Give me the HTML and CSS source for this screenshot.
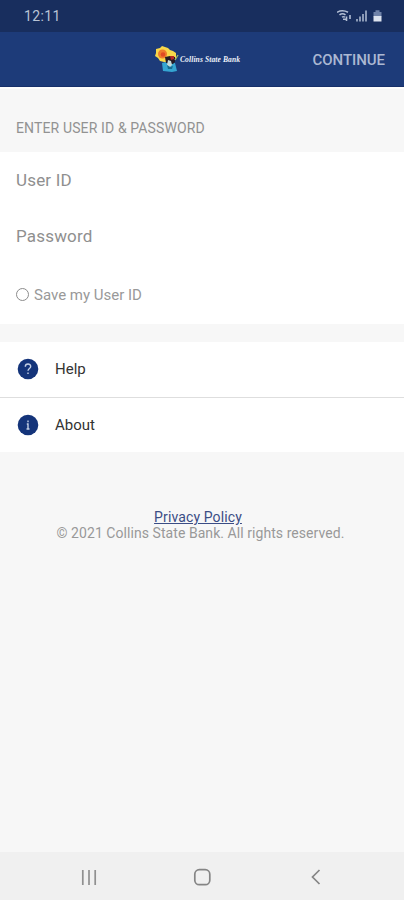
FILE: index.html
```html
<!DOCTYPE html>
<html lang="en">
<head>
<meta charset="utf-8">
<title>Collins State Bank</title>
<link rel="stylesheet" href="styles.css">
</head>
<body>
<div class="screen">
  <div class="status">
    <span class="clock">12:11</span>
    <svg class="status-icons" width="48" height="14" viewBox="0 0 48 14" fill="none">
      <path d="M0 3.300Q5.500 .2 11 3.300M2.500 5.800Q5.500 3.600 8.500 5.800M5 8.200Q6.500 7.200 8 8.200" stroke="#b3bfd5" stroke-width="1.600"/>
      <path d="M6 10.300h3M9.500 7.500v4.500M13 6v4" stroke="#b3bfd5" stroke-width="1.600"/>
      <path d="M20 10V12.500M23 7.500V12.500M26 5V12.500M29 1.500V12.500" stroke="#a9b6ce" stroke-width="1.600"/>
      <path d="M36.500 3h2V1.300h4V3h2v4.500h-8z" fill="#6f82a8"/>
      <path d="M36.500 7h8v5.500h-8z" fill="#dce3ee"/>
    </svg>
  </div>
  <header class="header">
    <div class="brand">
      <svg width="26" height="28" viewBox="0 0 26 28">
        <path d="M2 4l4-1 2-2 3 1 3 1 2 2 3 1 3 2v5l-5 5-7-1-4-1-2-3-3-2 1-3z" fill="#f8d84a"/>
        <circle cx="8.500" cy="9" r="4.500" fill="#ee7b2c"/>
        <circle cx="9" cy="9.500" r="2.300" fill="#df4a24"/>
        <path d="M8 18l4-1 9 1 2 8-5 1-9-1z" fill="#35a5d2"/>
        <path d="M11 12l5-1 5 1v5l-2 2-7-1z" fill="#251c25"/>
        <path d="M16 11l4 0 0 3-3 1z" fill="#b62727"/>
        <path d="M14 15l3 1 1 4-2 2-3-2z" fill="#c5d9d8"/>
        <path d="M13 20l3 2 3-1-1 3-4 0z" fill="#176c91"/>
        <path d="M21 15l3-5" stroke="#a5b867" stroke-width="1.300"/>
      </svg>
      <span class="brand-name">Collins State Bank</span>
    </div>
    <span class="continue">CONTINUE</span>
  </header>
  <main class="main">
    <h1 class="section-title"><span>ENTER USER ID &amp; PASSWORD</span></h1>
    <section class="form">
      <div class="field"><span class="user">User ID</span></div>
      <div class="field"><span class="pass">Password</span></div>
      <div class="save"><i class="radio"></i><span class="save-label">Save my User ID</span></div>
    </section>
    <nav class="menu">
      <div class="item">
        <svg width="22" height="22" viewBox="0 0 22 22"><circle cx="11" cy="11" r="10.300" fill="#14347a"/><path d="M8.300 8.700C8.300 5.200 13.700 5.200 13.700 8.500c0 2-2.700 2.100-2.700 4.300M11 14.400v1.700" fill="none" stroke="#c3cfe5" stroke-width="1.400"/></svg>
        <span class="help">Help</span>
      </div>
      <div class="item">
        <svg width="22" height="22" viewBox="0 0 22 22"><circle cx="11" cy="11" r="10.300" fill="#14347a"/><path d="M11 6.500v1.700M9.800 10H11v5M9.500 15h3" fill="none" stroke="#c3cfe5" stroke-width="1.400"/></svg>
        <span class="about">About</span>
      </div>
    </nav>
    <footer class="footer">
      <div class="policy"><span class="privacy">Privacy Policy</span></div>
      <div><span class="copyright">© 2021 Collins State Bank. All rights reserved.</span></div>
    </footer>
  </main>
  <div class="navbar">
    <svg width="404" height="48" viewBox="0 0 404 48" fill="none" stroke="#858585" stroke-width="1.700">
      <path d="M82.800 18v15M89 18v15M95.200 18v15" stroke="#909090"/>
      <rect x="194.800" y="17.700" width="15" height="15" rx="4.500"/>
      <path d="M319.500 18l-7 7 7 7"/>
    </svg>
  </div>
</div>
</body>
</html>
```
FILE: styles.css
```css
* { box-sizing: border-box; }
body { margin: 0; font-family: Roboto, sans-serif; background: #f7f7f7; }
.screen { width: 404px; height: 900px; display: flex; flex-direction: column; overflow: hidden; }
svg { display: block; flex: none; }
span { white-space: nowrap; }
.status { height: 32px; background: #182e5e; display: flex; align-items: center; justify-content: space-between; padding: 0 19px 0 24px; }
.clock { color: #b9c3d5; font-size: 14px; letter-spacing: .35px; }
.header { height: 55px; background: #1d3b79; border-bottom: 1px solid #17306a; display: grid; grid-template-columns: 154px 1fr auto; align-items: center; padding: 1px 19px 0 0; }
.brand { grid-column: 2; display: flex; align-items: center; }
.brand svg { margin-top: -2px; }
.brand-name { font: italic bold 7.500px "Liberation Serif", serif; letter-spacing: .12px; color: #eef2fa; }
.continue { color: #abb8d2; font-size: 15px; font-weight: 500; letter-spacing: -.05px; }
.main { flex: 1; }
.section-title { margin: 0; height: 65px; border-top: 2px solid #fdfdfd; padding: 31px 0 0 16px; font-size: 14px; line-height: 16px; font-weight: 400; letter-spacing: .13px; color: #929292; }
.form { height: 172px; background: #fff; }
.field { height: 56px; padding-left: 16px; display: flex; align-items: center; font-size: 17px; letter-spacing: .18px; color: #8f8f8f; }
.save { height: 60px; padding: 1px 0 0 16px; display: flex; align-items: center; gap: 5px; font-size: 15px; color: #999; }
.radio { width: 13px; height: 13px; border: 1.500px solid #8c8c8c; border-radius: 50%; }
.menu { margin-top: 18px; background: #fff; }
.item { height: 55px; display: flex; align-items: center; gap: 16px; padding: 0 0 2px 17px; font-size: 15px; color: #333; }
.item + .item { border-top: 1px solid #dedede; padding-bottom: 0; }
.footer { padding-top: 57px; text-align: center; font-size: 14px; line-height: 16px; color: #999; }
.footer div { padding-right: 3px; }
.footer .policy { padding-right: 8px; }
.privacy { color: #3b4d85; text-decoration: underline; letter-spacing: .12px; }
.copyright { letter-spacing: .06px; }
.navbar { height: 48px; background: #f0f0f0; }
```
